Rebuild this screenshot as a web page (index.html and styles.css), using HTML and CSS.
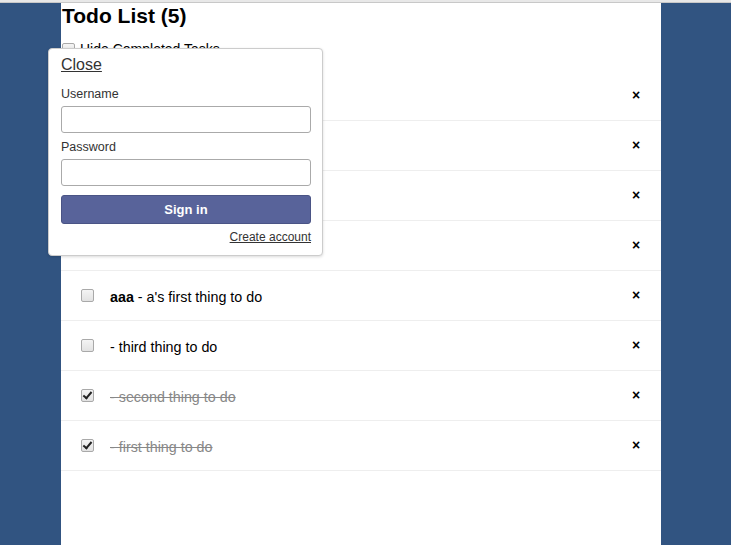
FILE: index.html
```html
<!DOCTYPE html>
<html>
<head>
<meta charset="utf-8">
<link rel="stylesheet" href="styles.css">
</head>
<body>
<div class="topbar"></div>
<div class="container">
  <header class="header">
    <h1>Todo List (5)</h1>
    <label class="hide-completed"><input type="checkbox" class="cb"> Hide Completed Tasks</label>
  </header>
  <ul class="tasks">
    <li class="task"><input type="checkbox" class="cb"><span class="text"></span><button class="delete">&times;</button></li>
    <li class="task"><input type="checkbox" class="cb"><span class="text"></span><button class="delete">&times;</button></li>
    <li class="task"><input type="checkbox" class="cb"><span class="text"></span><button class="delete">&times;</button></li>
    <li class="task"><input type="checkbox" class="cb"><span class="text"></span><button class="delete">&times;</button></li>
    <li class="task"><input type="checkbox" class="cb"><span class="text"><b>aaa</b> - a's first thing to do</span><button class="delete">&times;</button></li>
    <li class="task"><input type="checkbox" class="cb"><span class="text">- third thing to do</span><button class="delete">&times;</button></li>
    <li class="task checked"><input type="checkbox" class="cb" checked><span class="text">- second thing to do</span><button class="delete">&times;</button></li>
    <li class="task checked"><input type="checkbox" class="cb" checked><span class="text">- first thing to do</span><button class="delete">&times;</button></li>
  </ul>
  <div class="login-dropdown">
    <a class="close" href="#">Close</a>
    <label class="field-label">Username</label>
    <input class="field" type="text">
    <label class="field-label">Password</label>
    <input class="field" type="password">
    <button class="signin">Sign in</button>
    <div class="create-row"><a class="create" href="#">Create account</a></div>
  </div>
</div>
</body>
</html>
```
FILE: styles.css
```css
html, body {
  margin: 0;
  padding: 0;
  height: 100%;
}
body {
  background: #315481;
  font-family: "Liberation Sans", Arial, sans-serif;
  font-size: 14px;
  color: #333;
  overflow: hidden;
}
.topbar {
  height: 2px;
  background: #e8e8e8;
  border-bottom: 1px solid #c8c8c8;
}
.container {
  position: relative;
  width: 600px;
  margin-left: 61px;
  background: #fff;
  min-height: calc(100% - 3px);
}
.header {
  padding: 1px 0 0 1px;
  height: 68px;
  box-sizing: border-box;
}
.header h1 {
  margin: 0;
  font-size: 21px;
  font-weight: bold;
  color: #000;
  line-height: 24px;
}
.hide-completed {
  display: flex;
  align-items: center;
  gap: 5px;
  margin-top: 13px;
  font-size: 14px;
  color: #000;
}
.cb {
  appearance: none;
  -webkit-appearance: none;
  width: 13px;
  height: 13px;
  margin: 0;
  border: 1px solid #a9a9a9;
  border-radius: 2px;
  background: linear-gradient(#f4f4f4, #e2e2e2);
  box-sizing: border-box;
  position: relative;
  flex: none;
}
.cb:checked::after {
  content: "";
  position: absolute;
  left: 3px;
  top: 0px;
  width: 3px;
  height: 7px;
  border: solid #222;
  border-width: 0 2px 2px 0;
  transform: rotate(40deg);
}
.tasks {
  list-style: none;
  margin: 0;
  padding: 0;
}
.task {
  display: flex;
  align-items: center;
  height: 50px;
  box-sizing: border-box;
  border-bottom: 1px solid #eee;
  padding-left: 20px;
}
.task .text {
  margin-left: 16px;
  margin-top: 3px;
  color: #000;
  font-size: 14.3px;
}
.task.checked .text {
  color: #888;
  text-decoration: line-through;
}
.delete {
  margin-left: auto;
  margin-right: 20px;
  margin-bottom: 2px;
  border: none;
  background: none;
  padding: 0;
  font-family: "Liberation Sans", Arial, sans-serif;
  font-weight: bold;
  font-size: 14px;
  color: #000;
  width: 10px;
  line-height: 1;
}
.login-dropdown {
  position: absolute;
  left: -13px;
  top: 45px;
  width: 275px;
  height: 208px;
  box-sizing: border-box;
  background: #fff;
  border: 1px solid #ccc;
  border-radius: 4px;
  box-shadow: 0 1px 3px rgba(0,0,0,0.15);
  padding: 6px 11px 0 12px;
  display: flex;
  flex-direction: column;
  color: #333;
}
.close {
  color: #333;
  font-size: 16px;
  text-decoration: underline;
  align-self: flex-start;
  line-height: 20px;
}
.field-label {
  font-size: 12.5px;
  line-height: 15px;
  margin-top: 12px;
  color: #333;
}
.field-label + .field {
  margin-top: 4px;
}
.field {
  height: 27px;
  width: 250px;
  box-sizing: border-box;
  border: 1px solid #aaa;
  border-radius: 3px;
  background: #fff;
}
.field + .field-label {
  margin-top: 7px;
}
.signin {
  margin-top: 9px;
  height: 29px;
  width: 250px;
  background: #58639a;
  border: 1px solid #4a5485;
  border-radius: 3px;
  color: #fff;
  font-family: "Liberation Sans", Arial, sans-serif;
  font-size: 13px;
  font-weight: bold;
}
.create-row {
  width: 250px;
  text-align: right;
  margin-top: 5px;
  line-height: 15px;
}
.create {
  color: #333;
  font-size: 12px;
  text-decoration: underline;
}
```
